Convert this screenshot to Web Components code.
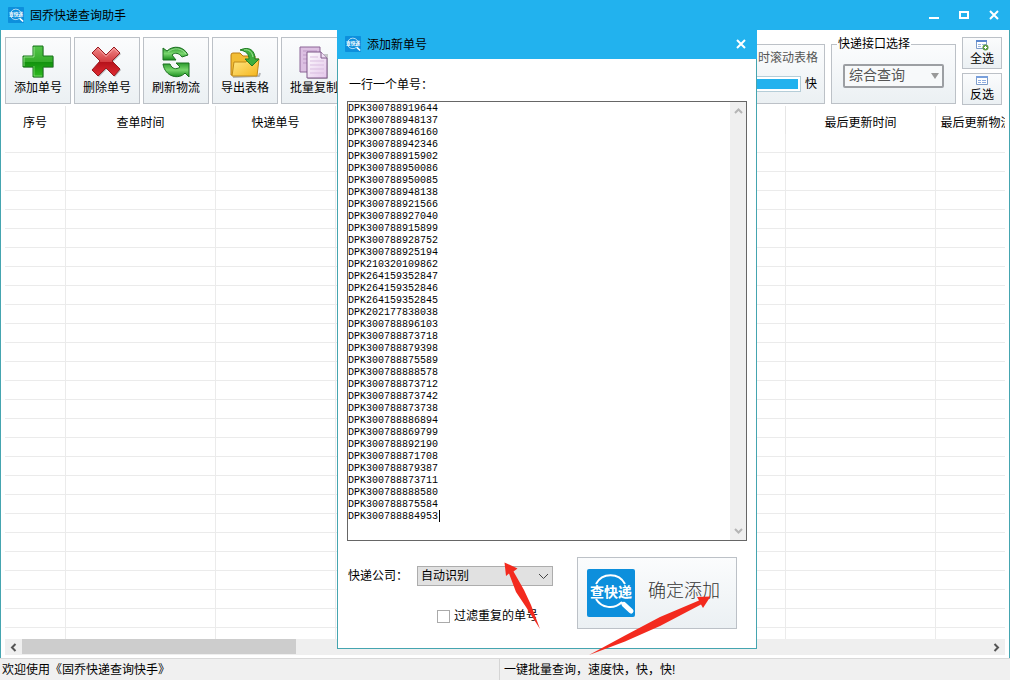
<!DOCTYPE html>
<html lang="zh-CN">
<head>
<meta charset="utf-8">
<meta name="viewport" content="width=device-width, initial-scale=1">
<title>固乔快递查询助手</title>
<style>
  html, body { height: 100%; }
  body {
    margin: 0;
    overflow: hidden;
    background: #fff;
    color: #000;
    font: 12px/16px "Liberation Sans", "Noto Sans CJK SC", sans-serif;
    --brand: #22b2ee;
    --edge: #45a5b0;
    --panel: linear-gradient(#fbfcfd, #ebf0f3);
    --panel-edge: #bcc1c7;
    --bar: #efefef;
  }
</style>
</head>
<body>
<app-window></app-window>
<script>
const RESET = `
  *, *::before, *::after { box-sizing: border-box; }
  button, input, select, textarea { font: inherit; color: inherit; margin: 0; }
  svg { display: block; flex: none; }
`;

function define(name, css, html, setup) {
  const template = document.createElement('template');
  template.innerHTML = `<style>${RESET}${css}</style>${html}`;
  customElements.define(name, class extends HTMLElement {
    connectedCallback() {
      if (this.shadowRoot) return;
      const root = this.attachShadow({ mode: 'open' });
      root.append(template.content.cloneNode(true));
      if (setup) setup(root, this);
    }
  });
}

/* Logo: magnifier over the product name */
define('brand-logo', `
  :host { display: block; width: 48px; height: 48px; flex: none; }
  svg { width: 100%; height: 100%; }
  text { font: bold 14px "Noto Sans CJK SC", sans-serif; fill: #fff; }
`, `
  <svg viewBox="0 0 48 48" aria-hidden="true">
    <rect width="48" height="48" rx="2" fill="#0d8fdc"/>
    <path d="M9 15A16.500 16.500 0 0 1 38 15M9 30A16.500 16.500 0 0 0 34.500 33.500" fill="none" stroke="#fff" stroke-width="2"/>
    <path d="M34 33L37 36" stroke="#fff" stroke-width="2"/>
    <path d="M37 35.500L44 42" stroke="#fff" stroke-width="5" stroke-linecap="round"/>
    <text x="24" y="28" text-anchor="middle">查快递</text>
  </svg>
`);

/* Title bar */
define('title-bar', `
  :host { display: flex; align-items: center; height: 30px; padding: 0 8px; gap: 6px; background: var(--brand); flex: none; }
  brand-logo { width: 16px; height: 16px; }
  h1 { margin: 0; padding-top: 2px; font: inherit; flex: 1; }
  nav { display: flex; gap: 14px; }
  ::slotted(button) { display: grid; place-items: center; width: 16px; height: 16px; padding: 0; border: 0; background: none; color: #fff; }
`, `<brand-logo></brand-logo><h1><slot></slot></h1><nav><slot name="controls"></slot></nav>`);

/* Toolbar button */
define('tool-button', `
  :host { display: block; flex: none; }
  button {
    display: flex; flex-direction: column; align-items: center; justify-content: flex-end;
    width: 66px; height: 67px; padding: 0 0 7px; border: 1px solid var(--panel-edge);
    background: var(--panel); white-space: nowrap;
  }
  :host([small]) button { width: 40px; height: 32px; padding: 0 0 1px; }
`, `<button type="button"><slot name="icon"></slot><span><slot></slot></span></button>`);

/* Titled group */
define('group-box', `
  :host { display: block; flex: none; }
  fieldset { height: 66px; min-width: 0; margin: 0; padding: 0 11px; border: 1px solid var(--panel-edge); background: var(--panel); }
  legend { padding: 0 1px; margin-left: -6px; height: 12px; line-height: 12px; }
`, `<fieldset><legend><slot name="legend"></slot></legend><slot></slot></fieldset>`);

/* Drop-down */
define('drop-down', `
  :host { display: grid; align-items: center; }
  select { grid-area: 1 / 1; appearance: none; width: 100%; height: 20px; padding: 0 3px; border: 1px solid #adadad; border-radius: 0; background: #e1e1e1; }
  svg { grid-area: 1 / 1; justify-self: end; margin-right: 4px; pointer-events: none; }
  .solid { display: none; }
  :host([large]) select { height: 24px; border: 2px solid #9c9fa3; border-radius: 2px; background: #f7f9fa; font-size: 14px; line-height: 18px; color: #555; padding: 0 4px 2px; }
  :host([large]) .solid { display: block; }
  :host([large]) .line { display: none; }
`, `
  <select></select>
  <svg class="line" width="11" height="8" viewBox="0 0 11 8"><path d="M1 2l4.500 4.500L10 2" fill="none" stroke="#444"/></svg>
  <svg class="solid" width="10" height="8" viewBox="0 0 10 8"><path d="M1 1h8L5 7z" fill="#999"/></svg>
`, (root, host) => {
  const select = root.querySelector('select');
  select.setAttribute('aria-label', host.getAttribute('label'));
  select.add(new Option(host.getAttribute('value')));
});

/* Toolbar */
define('tool-bar', `
  :host { display: flex; gap: 3px; padding: 7px 7px 2px 4px; height: 76px; flex: none; }
  .gap { flex: 1; }
  .groups { display: flex; gap: 6px; padding-top: 1px; }
  .speed { width: 160px; }
  .scroll { display: block; text-align: right; color: #555; margin: 0 -5px 0 0; }
  .rate { display: flex; align-items: center; justify-content: flex-end; gap: 4px; margin: 10px -4px 0 0; }
  progress { appearance: none; width: 90px; height: 16px; padding: 2px; border: 1px solid #b5cdd8; background: #fff; }
  progress::-webkit-progress-bar { background: #fff; }
  progress::-webkit-progress-value { background: var(--brand); }
  .api { width: 125px; }
  drop-down { margin-top: 14px; }
  .pair { display: flex; flex-direction: column; gap: 4px; margin-top: -1px; }
`, `
  <tool-button>
    <svg slot="icon" width="36" height="36" viewBox="0 0 36 36"><defs><linearGradient id="g" x1="0" y1="0" x2="0" y2="1"><stop offset="0" stop-color="#55c54c"/><stop offset=".5" stop-color="#35ad2b"/><stop offset=".52" stop-color="#12920e"/><stop offset="1" stop-color="#2fbb20"/></linearGradient></defs>
      <path d="M14 3h10v10h10v11H24v10H14V24H4V13h10z" fill="#0003"/><path d="M13 2h10v10h10v11H23v10H13V23H3V12h10z" fill="url(#g)" stroke="#16751a"/><path d="M14 22V32h8" fill="none" stroke="#9de88f" opacity=".6"/><path d="M14 3v10H4v9" fill="none" stroke="#b3f0a8" opacity=".7"/></svg>添加单号
  </tool-button>
  <tool-button>
    <svg slot="icon" width="36" height="36" viewBox="0 1 36 36"><defs><linearGradient id="r" x1="0" y1="0" x2="0" y2="1"><stop offset="0" stop-color="#f08a8a"/><stop offset=".5" stop-color="#d43e42"/><stop offset=".52" stop-color="#b5121b"/><stop offset="1" stop-color="#e02c33"/></linearGradient></defs>
      <path d="M10 5l8 8 8-8 6 6-8 8 8 8-6 7-8-8-8 8-6-6 8-9-8-8z" fill="#0004"/><path d="M9 4l8 8 8-8 6 6-8 8 8 8-6 7-8-8-8 8-6-6 8-9-8-8z" fill="url(#r)" stroke="#991a20"/><path d="M9 5.500l8 8 8-8L29.500 10" fill="none" stroke="#fbb" opacity=".7"/></svg>删除单号
  </tool-button>
  <tool-button>
    <svg slot="icon" width="36" height="36" viewBox="0 1 36 36" stroke-linejoin="round"><defs><linearGradient id="f" x1="0" y1="0" x2="0" y2="1"><stop offset="0" stop-color="#2a9a2c"/><stop offset=".5" stop-color="#79d66e"/><stop offset="1" stop-color="#168c1a"/></linearGradient></defs>
      <path d="M5 5l4 3c6-6 17-5 21 4l-6 2c-3-4-7-5-10-2l4 5H5z" fill="url(#f)" stroke="#1b6f20"/><path d="M31 20H18l4 4c-4 3-8 2-10-3H5c2 13 16 16 22 9l4 4z" fill="url(#f)" stroke="#1b6f20"/><path d="M10 9c6-5 14-4 18 2" stroke="#b9efb0" fill="none" opacity=".7"/></svg>刷新物流
  </tool-button>
  <tool-button>
    <svg slot="icon" width="36" height="36" viewBox="0 1 36 36" stroke-linejoin="round"><defs><linearGradient id="y" x1="0" y1="0" x2="1" y2="1"><stop offset="0" stop-color="#ffe98a"/><stop offset="1" stop-color="#f5b51c"/></linearGradient></defs>
      <path d="M6 34l26-1 1-3" stroke="#0004" stroke-width="2" fill="none"/><path d="M4 32V12q0-2 2-2h7l3 3h12v19z" fill="#f2bd35" stroke="#b97d12"/><path d="M5 33l2-14h12l3-3h10l-2 17z" fill="url(#y)" stroke="#c08a18"/><path d="M13 7c9-4 15 0 15 9h4l-7 7-7-7h4c0-5-3-8-9-9z" fill="#3fae3c" stroke="#1f7d24"/><path d="M17 7c5-1 8 2 9 7" fill="none" stroke="#a9e79d"/></svg>导出表格
  </tool-button>
  <tool-button>
    <svg slot="icon" width="36" height="36" viewBox="0 1 36 36"><defs><linearGradient id="p" x1="0" y1="0" x2="1" y2="1"><stop offset="0" stop-color="#fff"/><stop offset="1" stop-color="#e3c5ea"/></linearGradient></defs>
      <path d="M4 4h20v25H4z" fill="#dcc0e2" stroke="#8b6596"/><path d="M7 8h14M7 12h14M7 16h14M7 20h14" stroke="#bd9ac6"/><path d="M12 11h20v25H12z" fill="#0003"/><path d="M11 9h14l6 6v20H11z" fill="url(#p)" stroke="#7d5788"/><path d="M25 9v6h6" fill="#efe0f3" stroke="#7d5788"/><path d="M14 14h8M14 18h14M14 22h14M14 26h14M14 30h14" stroke="#d9bde0"/></svg>批量复制
  </tool-button>
  <div class="gap"></div>
  <div class="groups">
    <group-box class="speed">
      <label class="scroll" for="rate">时滚动表格</label>
      <div class="rate"><progress id="rate" max="100" value="100"></progress><span>快</span></div>
    </group-box>
    <group-box class="api"><span slot="legend">快递接口选择</span><drop-down large label="快递接口选择" value="综合查询"></drop-down></group-box>
    <div class="pair">
      <tool-button small><svg slot="icon" width="14" height="12" viewBox="0 0 14 12"><path d="M1.500 1.500h10v8h-10z" fill="#fff" stroke="#7d9cc9"/><path d="M1 1h11v2H1z" fill="#5b88cf"/><path d="M3 5.500h3M7 5.500h4M3 7.500h3" stroke="#9db7df"/><circle cx="10.500" cy="8.500" r="3" fill="#5d9b45"/><path d="M9 8.500h3M10.500 7v3" stroke="#fff"/></svg>全选</tool-button>
      <tool-button small><svg slot="icon" width="14" height="12" viewBox="0 0 14 12"><path d="M1.500 1.500h11v8h-11z" fill="#fff" stroke="#7d9cc9"/><path d="M1 1h12v2H1z" fill="#79a0dc"/><path d="M3 5.500h3M7 5.500h4M3 7.500h3M7 7.500h4" stroke="#8fade0"/></svg>反选</tool-button>
    </div>
  </div>
`);

/* Result table with its horizontal scroll bar */
define('result-grid', `
  :host { display: flex; flex-direction: column; flex: 1; min-height: 0; margin: 0 4px 3px; }
  .view { flex: 1; min-height: 0; overflow: hidden; }
  table { table-layout: fixed; border-collapse: separate; border-spacing: 0; width: 1013px; }
  th { height: 28px; padding: 6px 0 0; font-weight: normal; border-right: 1px solid #e6e6e6; }
  th span { display: block; line-height: 20px; white-space: nowrap; }
  td { height: 19px; padding: 0; border-right: 1px solid #ebebeb; border-bottom: 1px solid #ebebeb; }
  .bar { display: flex; align-items: stretch; height: 16px; background: var(--bar); flex: none; }
  .bar svg { align-self: center; }
  .track { flex: 1; }
  .thumb { width: 274px; height: 15px; background: #cdcdcd; }
`, `
  <div class="view"><table>
    <colgroup><col style="width:61px"><col style="width:150px"><col style="width:120px"><col style="width:450px"><col style="width:150px"><col></colgroup>
    <thead><tr><th><span>序号</span></th><th><span>查单时间</span></th><th><span>快递单号</span></th><th></th><th><span>最后更新时间</span></th><th><span>最后更新物流</span></th></tr></thead>
    <tbody></tbody>
  </table></div>
  <div class="bar">
    <svg width="17" height="15" viewBox="0 0 17 15"><path d="M10.500 4L7 7.500l3.500 3.500" fill="none" stroke="#555" stroke-width="2"/></svg>
    <div class="track"><div class="thumb"></div></div>
    <svg width="17" height="15" viewBox="0 0 17 15"><path d="M6.500 4L10 7.500 6.500 11" fill="none" stroke="#555" stroke-width="2"/></svg>
  </div>
`, root => {
  const body = root.querySelector('tbody');
  for (let i = 0; i < 40; i++) {
    const row = body.insertRow();
    for (let c = 0; c < 6; c++) row.insertCell();
  }
});

define('status-bar', `
  :host { display: grid; grid-template-columns: 499fr 511fr; height: 22px; line-height: 23px; background: #f0f0f0; border-top: 1px solid #d9d9d9; flex: none; white-space: nowrap; }
  ::slotted(span) { padding-left: 2px; }
  ::slotted(span:nth-of-type(2)) { border-left: 1px solid #d5d5d5; padding-left: 4px; }
`, `<slot></slot>`);

/* Multi-line list of tracking numbers */
define('number-list', `
  :host { display: flex; position: relative; height: 440px; border: 1px solid #666; background: #fff; }
  textarea { flex: 1; min-width: 0; padding: 1px 0 0; border: 0; outline: 0; resize: none; overflow: hidden; background: none;
    font: 10px/12px "Liberation Mono", "Noto Sans CJK SC", monospace; white-space: pre; }
  .bar { display: flex; flex-direction: column; justify-content: space-between; align-items: center; width: 16px; padding: 5px 0; background: var(--bar); }
  .caret { position: absolute; left: 91px; top: 408px; width: 1px; height: 12px; background: #000; }
`, `
  <textarea id="numbers" aria-label="一行一个单号" spellcheck="false"></textarea>
  <i class="caret"></i>
  <div class="bar">
    <svg width="9" height="8" viewBox="0 0 9 8"><path d="M1 6l3.500-3.500L8 6" fill="none" stroke="#b5b5b5" stroke-width="2"/></svg>
    <svg width="9" height="8" viewBox="0 0 9 8"><path d="M1 2l3.500 3.500L8 2" fill="none" stroke="#b5b5b5" stroke-width="2"/></svg>
  </div>
`, root => {
  root.querySelector('textarea').value = `300788919644 300788948137 300788946160 300788942346 300788915902 300788950086
    300788950085 300788948138 300788921566 300788927040 300788915899 300788928752 300788925194 210320109862
    264159352847 264159352846 264159352845 202177838038 300788896103 300788873718 300788879398 300788875589
    300788888578 300788873712 300788873742 300788873738 300788886894 300788869799 300788892190 300788871708
    300788879387 300788873711 300788888580 300788875584 300788884953`.split(/\s+/).map(n => 'DPK' + n).join('\n');
});

/* Dialog for adding numbers */
define('add-dialog', `
  :host { display: flex; flex-direction: column; width: 420px; background: #fff; border: 1px solid var(--edge); border-top: 0; }
  title-bar { height: 31px; margin: 0 -1px; }
  form { display: flex; flex-direction: column; padding: 18px 9px 19px; }
  .caption { padding-left: 2px; margin-bottom: 8px; }
  .bottom { display: flex; justify-content: space-between; padding: 16px 10px 0 1px; }
  .options { display: flex; flex-direction: column; gap: 22px; padding-top: 9px; }
  .company { display: flex; align-items: center; height: 20px; }
  .company span { width: 69px; }
  drop-down { width: 136px; }
  .filter { display: flex; align-items: center; gap: 4px; padding-left: 89px; }
  input { appearance: none; width: 13px; height: 13px; border: 1px solid #aaa; background: #fff; }
  .confirm { display: flex; align-items: center; gap: 13px; width: 160px; height: 72px; padding: 0 9px; border: 1px solid var(--panel-edge); background: var(--panel); font-size: 18px; font-weight: 300; line-height: 24px; color: #333; white-space: nowrap; }
  .confirm span { padding-bottom: 4px; }
`, `
  <title-bar>添加新单号
    <button slot="controls" type="button" aria-label="关闭"><svg width="10" height="10" viewBox="0 0 10 10"><path d="M1 1l8 8M9 1L1 9" stroke="#fff" stroke-width="2"/></svg></button>
  </title-bar>
  <form>
    <label class="caption">一行一个单号：</label>
    <number-list></number-list>
    <div class="bottom">
      <div class="options">
        <div class="company"><span>快递公司：</span><drop-down label="快递公司" value="自动识别"></drop-down></div>
        <label class="filter"><input type="checkbox">过滤重复的单号</label>
      </div>
      <button type="button" class="confirm"><brand-logo></brand-logo><span>确定添加</span></button>
    </div>
  </form>
`, root => {
  root.querySelector('.caption').addEventListener('click', () => {
    root.querySelector('number-list').shadowRoot.querySelector('textarea').focus();
  });
});

/* Red pointers over the dialog */
define('pointer-marks', `
  :host { display: block; width: 230px; height: 100px; pointer-events: none; }
`, `
  <svg width="230" height="100" viewBox="497 557 230 100" fill="#f32a1e">
    <path d="M504.500 562.500L517.500 568.500 513.500 571.500 524 590 531 605 540 629 526 607 516 592 509 573.500 506 576z"/>
    <path d="M710.500 596.500L703 608 701 604.500 660 626 625 641.500 589 655 625 635.500 660 617 699 600.500 697 597z"/>
  </svg>
`);

define('app-window', `
  :host { display: flex; flex-direction: column; height: 100vh; position: relative; overflow: hidden; }
  main { display: flex; flex-direction: column; flex: 1; min-height: 0; border: solid var(--edge); border-width: 0 1px; }
  add-dialog { position: absolute; left: 337px; top: 28px; }
  pointer-marks { position: absolute; left: 497px; top: 557px; }
`, `
  <title-bar>固乔快递查询助手
    <button slot="controls" type="button" aria-label="最小化"><svg width="10" height="10" viewBox="0 0 10 10"><path d="M0 8h10" stroke="#fff" stroke-width="2"/></svg></button>
    <button slot="controls" type="button" aria-label="最大化"><svg width="10" height="10" viewBox="0 0 10 10"><path d="M1 2h8v6H1z" fill="none" stroke="#fff" stroke-width="2"/></svg></button>
    <button slot="controls" type="button" aria-label="关闭"><svg width="10" height="10" viewBox="0 0 10 10"><path d="M1 1l8 8M9 1L1 9" stroke="#fff" stroke-width="2"/></svg></button>
  </title-bar>
  <main><tool-bar></tool-bar><result-grid></result-grid></main>
  <status-bar><span>欢迎使用《固乔快递查询快手》</span><span>一键批量查询，速度快，快，快!</span></status-bar>
  <add-dialog></add-dialog>
  <pointer-marks></pointer-marks>
`);
</script>
</body>
</html>
